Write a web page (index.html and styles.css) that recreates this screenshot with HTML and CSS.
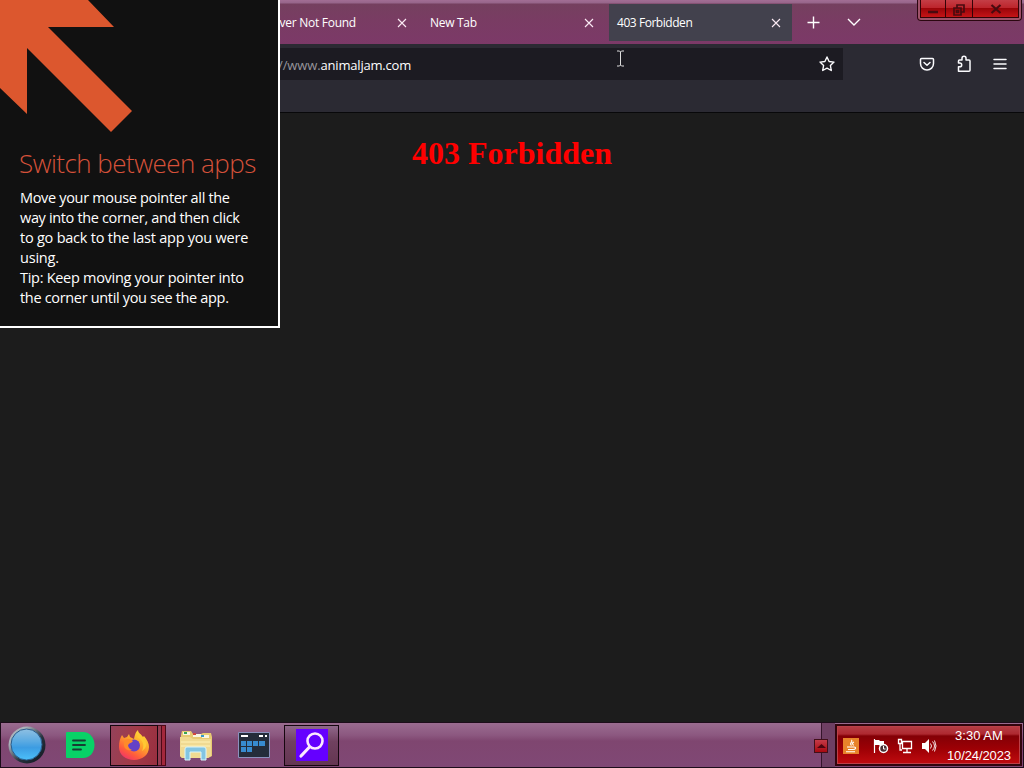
FILE: index.html
```html
<!DOCTYPE html>
<html lang="en">
<head>
    <meta charset="UTF-8">
    <title>403 Forbidden</title>
    <link rel="stylesheet" href="styles.css">
</head>
<body>

<div class="tabbar">
    <div class="tab">
        <span class="tab-title first">Server Not Found</span>
        <svg class="close" viewBox="0 0 10 10"><path d="M1 1l8 8M9 1l-8 8"/></svg>
    </div>
    <div class="tab">
        <span class="tab-title newtab">New Tab</span>
        <svg class="close" viewBox="0 0 10 10"><path d="M1 1l8 8M9 1l-8 8"/></svg>
    </div>
    <div class="tab active">
        <span class="tab-title">403 Forbidden</span>
        <svg class="close" viewBox="0 0 10 10"><path d="M1 1l8 8M9 1l-8 8"/></svg>
    </div>
    <svg class="plus" viewBox="0 0 13 13"><path d="M6.5 .5v12M.5 6.500h12"/></svg>
    <svg class="chevron" viewBox="0 0 14 8"><path d="M1 1l6 6 6-6"/></svg>
    <div class="window-buttons">
        <div class="win min"><svg width="12" height="10" viewBox="0 0 12 10"><path d="M1 8h10" stroke-width="2.500"/></svg></div>
        <div class="win max"><svg width="12" height="12" viewBox="0 0 12 12"><path d="M4 4V1h7v7H8M1 4h7v7H1zM3.500 6.500h2v2h-2z"/></svg></div>
        <div class="win exit"><svg width="12" height="10" viewBox="0 0 12 10"><path d="M1.500 1l9 8M10.500 1l-9 8" stroke-width="2.200"/></svg></div>
    </div>
</div>

<div class="toolbar">
    <div class="urlbar">
        <span class="url"><span class="dim">//www.</span>animaljam.com</span>
        <svg class="star" viewBox="0 0 16 16"><path d="M8 1l2.100 4.500 4.900.6-3.600 3.400.9 5L8 12.100 3.700 14.500l.9-5L1 6.100l4.900-.6z"/></svg>
    </div>
    <div class="tools">
        <svg width="16" height="16" viewBox="0 0 16 16"><path d="M2.500 2.500h11Q14.500 2.500 14.500 3.500V7.500a6.500 6.500 0 0 1-13 0V3.500Q1.500 2.500 2.500 2.500zM5 6.500L8 9.300 11 6.500"/></svg>
        <svg width="16" height="18" viewBox="0 0 16 18"><path d="M2.500 16.200v-4.400h1.300a1.900 1.900 0 0 0 0-3.800H2.500V6Q2.500 5 3.500 5H6V3.300a2 2 0 0 1 4 0V5h3Q14 5 14 6v9.200q0 1-1 1z"/></svg>
        <svg width="14" height="12" viewBox="0 0 14 12"><path d="M1 1.500h12M1 6h12M1 10.500h12"/></svg>
    </div>
</div>

<div class="page">
    <h1>403 Forbidden</h1>
</div>

<svg class="pointer" viewBox="0 0 9 17"><path d="M1 1h2.500l1 1 1-1H8M4.500 2v13M1 16h2.500l1-1 1 1H8"/></svg>

<div class="tip">
    <svg class="arrow" viewBox="0 0 132 132"><path d="M0 0h88l26 27H48l84 84-21 21L27 48v66L0 88z"/></svg>
    <h2>Switch between apps</h2>
    <p>
        <span class="l1">Move your mouse pointer all the</span><br>
        <span class="l2">way into the corner, and then click</span><br>
        <span class="l3">to go back to the last app you were</span><br>
        <span>using.</span><br>
        <span class="l5">Tip: Keep moving your pointer into</span><br>
        <span class="l6">the corner until you see the app.</span>
    </p>
</div>

<div class="taskbar">
    <svg class="start" viewBox="0 0 38 38">
        <defs>
            <linearGradient id="rim" x1="0" y1="0" x2="1" y2="1">
                <stop offset=".25" stop-color="#a9b2ba"/>
                <stop offset=".6" stop-color="#26303c"/>
                <stop offset="1" stop-color="#10151d"/>
            </linearGradient>
            <linearGradient id="orb" x1="0" y1="0" x2="0" y2="1">
                <stop offset="0" stop-color="#8fc0e2"/>
                <stop offset=".4" stop-color="#5aaae2"/>
                <stop offset=".6" stop-color="#3c9ce2"/>
                <stop offset="1" stop-color="#4cc0fa"/>
            </linearGradient>
        </defs>
        <circle cx="19" cy="19" r="18.500" fill="url(#rim)"/>
        <circle cx="18.500" cy="18.500" r="15.500" fill="url(#orb)" stroke="#2a5d8c"/>
    </svg>
    <svg class="doc" viewBox="0 0 30 28">
        <path d="M2 1h16c7 0 11.500 6 11.500 13S25 27 18 27H2Q1 27 1 26V2Q1 1 2 1z" fill="#08d267"/>
        <path d="M8 9.500h12M8 14h12M8 18.500h8" stroke="#173d33" stroke-width="1.800" stroke-linecap="round"/>
    </svg>
    <div class="task firefox">
        <svg width="32" height="32" viewBox="0 0 32 32">
            <defs>
                <linearGradient id="fox" x1=".8" y1="0" x2=".2" y2="1">
                    <stop offset="0" stop-color="#ffe63c"/>
                    <stop offset=".4" stop-color="#ffa62b"/>
                    <stop offset=".75" stop-color="#ff5b3c"/>
                    <stop offset="1" stop-color="#ee2f70"/>
                </linearGradient>
            </defs>
            <path d="M4 6l2 3 3-1 2-3 1 3 4 2c1-4 1-6 4-9 0 3 3 4 5 7l1-1c3 4 5 7 5 11 0 8-7 13-15 13S1 26 1 18c0-5 1-9 3-12z" fill="url(#fox)"/>
            <circle cx="16" cy="16.500" r="6" fill="#6542c7"/>
            <path d="M7 11c3-2 6-1 8 1-1 2-4 2-5 4 0 3 2 4 4 5-4 1-8-1-8-5 0-2 0-4 1-5z" fill="#ff8a2a"/>
            <path d="M19 8c6 3 8 8 5 14 3-2 5-5 4-8-1-4-4-5-6-9z" fill="#ffc933"/>
        </svg>
    </div>
    <div class="stack"></div>
    <svg class="folder" viewBox="0 0 34 32">
        <path d="M2 6l1-4h9l2 3h8l2-1h8l1 4v19l-4 2H3l-2-2z" fill="#e7ca72"/>
        <path d="M4 3h7v3H4zM14 5h8v3h-8zM23 6h7v3h-7z" fill="#f9f5df"/>
        <path d="M5 3h3v2H5z" fill="#36a553"/><path d="M14 4h3v2h-3z" fill="#d4463e"/><path d="M22 6h3v2h-3z" fill="#3399ca"/>
        <path d="M1 8h10l3 2h18v17l-3 2H3l-2-2z" fill="#f0da92"/>
        <path d="M2 13h29M2 17h29" stroke="#fff2b7"/>
        <path d="M6 31V20q0-2 2-2h17q2 0 2 2v11h-5v-8H11v8z" fill="#83c5e2" stroke="#d9f5fb"/>
    </svg>
    <svg class="tiles" viewBox="0 0 32 26">
        <path d="M.5.5h31v25H.5z" fill="#242c3a" stroke="#8b91bd"/>
        <path d="M3 4h7M21 4h4M27 4h2" stroke="#fff" stroke-width="1.800"/>
        <path d="M3 9h5v5H3zM9 9h5v5H9zM15 9h5v5h-5zM21 9h6v5h-6zM3 15h5v5H3zM9 15h5v5H9z" fill="#378bd0"/>
    </svg>
    <div class="task search">
        <svg width="32" height="32" viewBox="0 0 32 32">
            <path d="M0 0h32v32H0z" fill="#6500ff"/>
            <circle cx="19" cy="12" r="7.500" fill="none" stroke="#fce8ff" stroke-width="2.600"/>
            <path d="M13.500 18L5 27" stroke="#fce8ff" stroke-width="3.200" stroke-linecap="round"/>
        </svg>
    </div>
    <div class="expand"><span><svg width="9" height="6" viewBox="0 0 9 6"><path d="M0 5l4.500-4L9 5z"/></svg></span></div>
    <div class="tray">
        <svg class="java" viewBox="0 0 16 16">
            <path d="M0 0h16v16H0z" fill="#e8832a"/>
            <path d="M8.500 2c2 2-3 3 0 5.500M11 4c-2 1-2 1-.5 3.500M4 9h7c2.500 0 2 2.500-1 2.500M5 11.500h5M3 13.800h9" fill="none" stroke="#fff" stroke-width="1.100"/>
        </svg>
        <svg class="flag" viewBox="0 0 16 16">
            <path d="M1.500 1v14" stroke="#fff" stroke-width="1.200"/>
            <path d="M2 2h4l1 1h4v5H7L6 7H2z" fill="#fff"/>
            <circle cx="10.500" cy="10.500" r="4" fill="#4a3034" stroke="#fff" stroke-width="1.500"/>
            <path d="M10.500 8v3h2" fill="none" stroke="#fff"/>
        </svg>
        <svg class="network" viewBox="0 0 16 16">
            <path d="M5.500 3.500h9v7h-9zM10 11v3M6 14.500h8M1.500 1.500h3v4h-3zM3 6v6h2" fill="none" stroke="#fff" stroke-width="1.300"/>
        </svg>
        <svg class="volume" viewBox="0 0 16 16">
            <path d="M1 5h3l4-4v14l-4-4H1z" fill="#fff"/>
            <path d="M9.500 5.500q2 2.500 0 5M11.500 3.500q4 4.500 0 9M13.500 2.500q3 5.500 0 11" fill="none" stroke="#fff" stroke-width=".9"/>
        </svg>
        <div class="clock"><div class="time">3:30 AM</div><div class="date">10/24/2023</div></div>
    </div>
</div>

</body>
</html>
```
FILE: styles.css
```css
* {
    box-sizing: border-box;
}

body {
    margin: 0;
    width: 1024px;
    height: 768px;
    overflow: hidden;
    display: flex;
    flex-direction: column;
    position: relative;
    background-color: #1c1c1c;
    color: #fff;
    font-family: "Open Sans", "Noto Sans", sans-serif;
}

svg {
    display: block;
    flex: none;
}

/* tabs */
.tabbar {
    height: 44px;
    flex: none;
    display: flex;
    padding-left: 235px;
    background: linear-gradient(#a26e94 0, #96658a 3px, #75405f 4px, #793c63 20px, #7c3968 100%);
}

.tab {
    width: 183px;
    height: 37px;
    margin: 4px 4px 0 0;
    padding: 0 11px 0 8px;
    display: flex;
    align-items: center;
    justify-content: space-between;
}

.tab.active {
    background-color: #42414d;
}

.tab-title {
    font-size: 12px;
    letter-spacing: -0.45px;
    white-space: nowrap;
}

.tab-title.first {
    margin-left: 19px;
    letter-spacing: -0.26px;
}

.tab-title.newtab {
    letter-spacing: -0.3px;
}

.close {
    width: 10px;
    height: 10px;
    fill: none;
    stroke: #fbeaf4;
    stroke-width: 1.1;
}

.plus {
    width: 13px;
    height: 13px;
    margin: 16px 0 0 11px;
    stroke: #fff;
    stroke-width: 1.4;
}

.chevron {
    width: 14px;
    height: 8px;
    margin: 18px 0 0 27px;
    fill: none;
    stroke: #fff;
    stroke-width: 1.4;
}

.window-buttons {
    display: flex;
    width: 105px;
    height: 21px;
    margin-left: auto;
    margin-right: 2px;
    border: 1px solid #2b0710;
    border-top: 0;
    border-radius: 0 0 4px 4px;
    background-color: #9f5269;
    padding: 0 2px 2px;
}

.win {
    display: flex;
    align-items: center;
    justify-content: center;
    border: 1px solid #330307;
    border-top: 0;
    border-left: 0;
    background: linear-gradient(#c43e46 0, #bd252c 45%, #9b0509 50%, #c41417 100%);
}

.win svg {
    fill: none;
    stroke: #480b10;
    stroke-width: 1.7;
}

.win.min {
    width: 26px;
    border-left: 1px solid #330307;
}

.win.max {
    width: 27px;
    padding-top: 2px;
}

.win.exit {
    width: 46px;
}

/* address row */
.toolbar {
    height: 69px;
    flex: none;
    display: flex;
    align-items: flex-start;
    padding: 4px 17px 0 235px;
    background-color: #2b2a33;
    border-bottom: 1px solid #08080a;
}

.urlbar {
    width: 608px;
    height: 32px;
    display: flex;
    align-items: center;
    justify-content: space-between;
    padding: 0 8px 0 43px;
    background-color: #1c1b22;
}

.url {
    font-size: 13px;
    letter-spacing: -0.2px;
    padding-top: 2px;
}

.dim {
    color: #96959b;
    letter-spacing: -0.1px;
}

.star {
    width: 16px;
    height: 16px;
    fill: none;
    stroke: #fbfbfe;
    stroke-width: 1.4;
    stroke-linejoin: round;
}

.tools {
    display: flex;
    align-items: center;
    height: 32px;
    margin-left: auto;
    gap: 21px;
}

.tools svg {
    fill: none;
    stroke: #fbfbfe;
    stroke-width: 1.5;
    stroke-linecap: round;
    stroke-linejoin: round;
}

.page {
    flex: 1;
}

.page h1 {
    margin: 22px 0 0;
    text-align: center;
    font: bold 32px/37px "Liberation Serif", serif;
    color: #f00;
}

.pointer {
    position: absolute;
    left: 616px;
    top: 50px;
    width: 9px;
    height: 17px;
    fill: none;
    stroke: #ddd;
}

/* corner hint */
.tip {
    position: absolute;
    left: 0;
    top: 0;
    width: 280px;
    height: 328px;
    background-color: #111;
    border-right: 2px solid #fff;
    border-bottom: 2px solid #fff;
}

.arrow {
    width: 132px;
    height: 132px;
    fill: #dc572e;
}

.tip h2 {
    margin: 13px 0 0 19px;
    font-size: 26px;
    line-height: 36px;
    font-weight: 300;
    letter-spacing: -0.52px;
    color: #d6513a;
    white-space: nowrap;
}

.tip p {
    margin: 7px 0 0 20px;
    font-size: 14.5px;
    line-height: 20px;
    letter-spacing: -0.2px;
    white-space: nowrap;
}

.l1, .l6 {
    letter-spacing: -0.33px;
}

.l2 {
    letter-spacing: -0.35px;
}

.l3 {
    letter-spacing: -0.23px;
}

.l5 {
    letter-spacing: -0.29px;
}

/* taskbar */
.taskbar {
    height: 46px;
    flex: none;
    display: flex;
    align-items: center;
    border: 1px solid #1d0d1a;
    background: linear-gradient(#9a6c90 0, #8c5880 12px, #7f4670 18px, #804875 100%);
}

.start {
    width: 38px;
    height: 38px;
    margin-left: 7px;
}

.doc {
    width: 30px;
    height: 28px;
    margin-left: 19px;
}

.task {
    display: flex;
    align-items: center;
    justify-content: center;
    height: 41px;
    border: 1px solid #16070f;
}

.firefox {
    width: 48px;
    margin-left: 15px;
    background: linear-gradient(100deg, #94425a, #a23a48 50%, #982f40);
}

.stack {
    width: 8px;
    height: 41px;
    border: 1px solid #4d0917;
    border-left: 0;
    background: linear-gradient(to right, #943b51 3px, #4d0917 3px, #4d0917 4px, #a3283c 4px);
}

.folder {
    width: 34px;
    height: 32px;
    margin-left: 13px;
}

.tiles {
    width: 32px;
    height: 26px;
    margin-left: 25px;
}

.search {
    width: 55px;
    margin-left: 14px;
    padding-left: 1px;
    background: linear-gradient(#90688a, #70415f 40%, #643652);
}

.expand {
    width: 21px;
    height: 44px;
    margin-left: auto;
    display: flex;
    align-items: center;
    background: linear-gradient(to right, transparent 7px, #35152b 7px, #35152b 8px, #6e3f63 8px);
}

.expand span {
    display: flex;
    align-items: center;
    justify-content: center;
    width: 14px;
    height: 14px;
    margin-top: 2px;
    border: 1px solid #41101a;
    background: linear-gradient(#c53b48, #a80910);
}

.expand path {
    fill: #4c0510;
}

.tray {
    width: 187px;
    height: 42px;
    margin-right: 1px;
    padding-left: 6px;
    display: flex;
    align-items: center;
    border: 2px solid #32050d;
    background: linear-gradient(#b73e46 0, #ae2930 8px, #830006 10px, #9d0005 60%, #c10b0f 100%);
    box-shadow: inset 0 0 0 1px #bc4048;
}

.tray svg {
    width: 16px;
    height: 16px;
    margin-top: 2px;
}

.tray .flag {
    margin-left: 14px;
}

.tray .network {
    margin-left: 8px;
}

.tray .volume {
    margin-left: 8px;
}

.clock {
    margin-left: auto;
    margin-right: 9px;
    padding-top: 1px;
    font: 13px/20px "Liberation Sans", sans-serif;
    text-align: center;
    white-space: nowrap;
}

.date {
    letter-spacing: -0.1px;
}
```
